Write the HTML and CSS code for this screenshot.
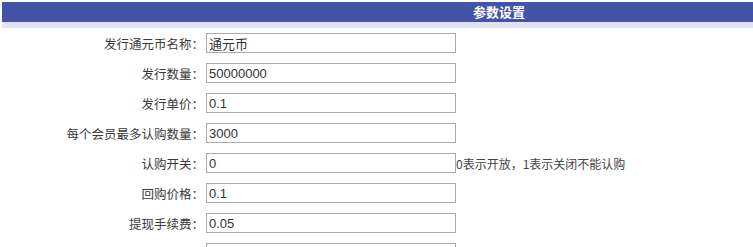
FILE: index.html
```html
<!DOCTYPE html>
<html lang="zh-CN">
<head>
    <meta charset="UTF-8">
    <title>参数设置</title>
    <link rel="stylesheet" href="styles.css">
</head>
<body>
    <div class="page">
        <div class="head">参数设置</div>
        <div class="sub"></div>
        <div class="form">
            <div class="row">
                <label>发行通元币名称：</label>
                <input type="text" value="通元币">
            </div>
            <div class="row">
                <label>发行数量：</label>
                <input type="text" value="50000000">
            </div>
            <div class="row">
                <label>发行单价：</label>
                <input type="text" value="0.1">
            </div>
            <div class="row">
                <label>每个会员最多认购数量：</label>
                <input type="text" value="3000">
            </div>
            <div class="row">
                <label>认购开关：</label>
                <input type="text" value="0">
                <span class="tip">0表示开放，1表示关闭不能认购</span>
            </div>
            <div class="row">
                <label>回购价格：</label>
                <input type="text" value="0.1">
            </div>
            <div class="row">
                <label>提现手续费：</label>
                <input type="text" value="0.05">
            </div>
            <div class="row">
                <label>每日未出售通元币扣手续费：</label>
                <input type="text" value="0.01">
            </div>
        </div>
    </div>
</body>
</html>
```

FILE: styles.css
```css
*{
    margin: 0;
    padding: 0;
    box-sizing: border-box;
}
body{
    font-family: "Noto Sans CJK SC", sans-serif;
    font-size: 12.5px;
    color: #3a3a3a;
    background: #fff;
    overflow: hidden;
}
.page{
    width: 996px;
    padding: 2px 0 0 2px;
}
.head{
    height: 20px;
    line-height: 20px;
    background: #4354a7;
    color: #fff;
    font-size: 13px;
    font-weight: bold;
    text-align: center;
}
.sub{
    height: 6px;
    background: #e0e2f6;
}
.row{
    display: flex;
    align-items: center;
    height: 30px;
}
.row label{
    width: 202px;
    text-align: right;
    white-space: nowrap;
}
.row input{
    width: 250px;
    height: 20px;
    margin-left: 2px;
    border: 1px solid #aaa;
    padding: 0 2px;
    font-family: "Liberation Sans", "Noto Sans CJK SC", sans-serif;
    font-size: 13px;
    color: #333;
    outline: 0;
}
.tip{
    font-size: 12px;
    color: #444;
    white-space: nowrap;
}
```
